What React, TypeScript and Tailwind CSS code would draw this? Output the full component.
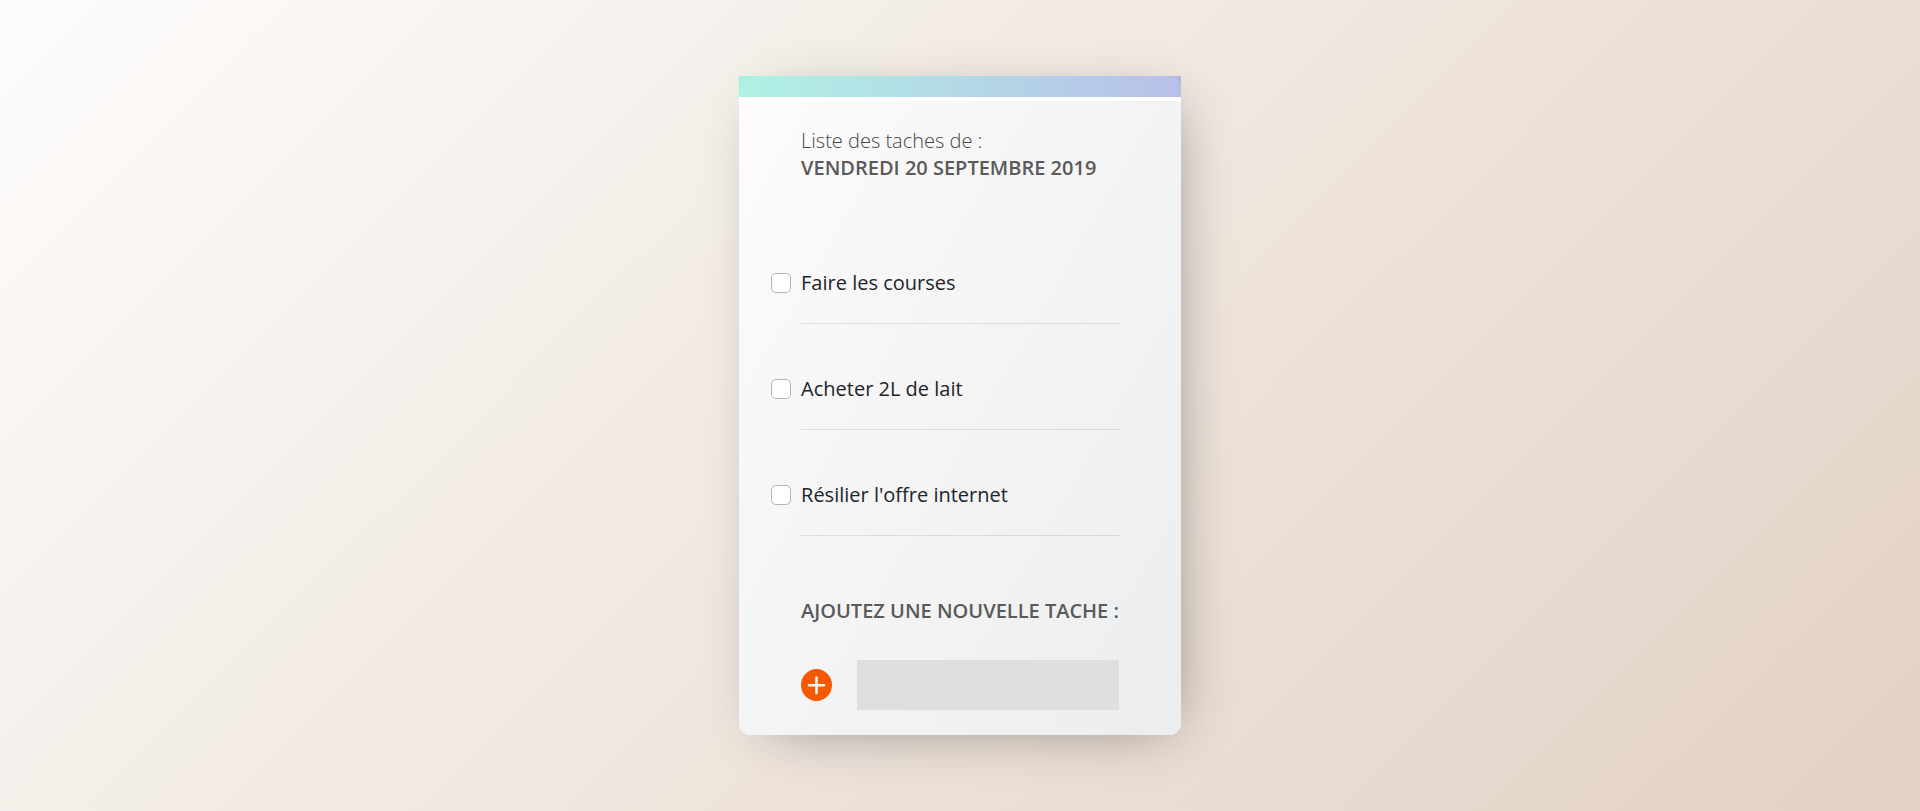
import { useState } from "react";
import type { FormEvent } from "react";

interface Task {
  id: number;
  label: string;
  done: boolean;
}

const initialTasks: Task[] = [
  { id: 1, label: "Faire les courses", done: false },
  { id: 2, label: "Acheter 2L de lait", done: false },
  { id: 3, label: "Résilier l'offre internet", done: false },
];

function TaskRow({ task, onToggle }: { task: Task; onToggle: () => void }) {
  return (
    <li className="-ml-[30px]">
      <label className="flex items-center gap-[10px] pt-[51px] pb-[27px] text-[#212529]">
        <input
          type="checkbox"
          checked={task.done}
          onChange={onToggle}
          className="size-5 shrink-0 appearance-none rounded-[5px] border border-[#adb5bd] bg-white checked:border-[#f15a00] checked:bg-[#f15a00]"
        />
        <span className={task.done ? "line-through" : ""}>{task.label}</span>
      </label>
      <hr className="ml-[30px] border-t border-black/10" />
    </li>
  );
}

export default function App() {
  const [tasks, setTasks] = useState<Task[]>(initialTasks);
  const [draft, setDraft] = useState("");

  const toggle = (id: number) =>
    setTasks(tasks.map((t) => (t.id === id ? { ...t, done: !t.done } : t)));

  const addTask = (event: FormEvent) => {
    event.preventDefault();
    const label = draft.trim();
    if (!label) return;
    setTasks([...tasks, { id: Date.now(), label, done: false }]);
    setDraft("");
  };

  return (
    <div className="flex min-h-screen items-center justify-center bg-[linear-gradient(135deg,#fdfcfb_0%,#e2d1c3_100%)] font-['Open_Sans','Noto_Sans',sans-serif] text-xl leading-[27px]">
      <main className="w-fit rounded-[12px] bg-white shadow-[10px_10px_56px_-22px_rgba(0,0,0,0.46)]">
        <div className="h-[21px] bg-[linear-gradient(90deg,#7ae8d3_0%,#8996d9_100%)] opacity-60" />
        <div className="mt-1 rounded-b-[12px] bg-[linear-gradient(120deg,#fdfbfb_0%,#ebedee_100%)] px-[62px] pt-[26px] pb-[25px]">
          <header>
            <p className="font-light text-[#464646]">Liste des taches de :</p>
            <h1 className="font-semibold text-[#5a5a5a] uppercase">Vendredi 20 septembre 2019</h1>
          </header>

          <ul className="mt-[37px]">
            {tasks.map((task) => (
              <TaskRow key={task.id} task={task} onToggle={() => toggle(task.id)} />
            ))}
          </ul>

          <form onSubmit={addTask} className="mt-[61px] text-[#5a5a5a]">
            <label htmlFor="new-task" className="block font-semibold uppercase">
              Ajoutez une nouvelle tache :
            </label>
            <div className="mt-9 flex items-center gap-[25px]">
              <button type="submit" aria-label="Ajouter" className="shrink-0 rounded-full">
                <svg viewBox="0 0 31 32" className="h-8 w-[31px]" aria-hidden="true">
                  <ellipse cx="15.5" cy="16" rx="15.5" ry="16" fill="#f45800" />
                  <path
                    d="M15.5 8.5v15.6M8 16.2h15"
                    stroke="#fdf3ec"
                    strokeWidth="2.6"
                    strokeLinecap="round"
                  />
                </svg>
              </button>
              <input
                id="new-task"
                type="text"
                value={draft}
                onChange={(e) => setDraft(e.target.value)}
                className="h-[50px] w-0 grow bg-[#dfdfdf] px-3 outline-none"
              />
            </div>
          </form>
        </div>
      </main>
    </div>
  );
}
